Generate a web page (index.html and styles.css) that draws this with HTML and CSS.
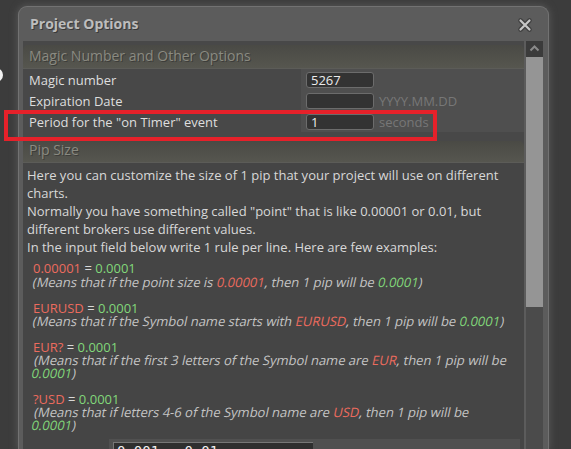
FILE: index.html
```html
<!DOCTYPE html>
<html lang="en">
<head>
  <meta charset="UTF-8" />
  <title>Project Options</title>
  <link rel="stylesheet" href="styles.css">
</head>
<body>
  <div class="dot"></div>
  <div class="window">
    <div class="titlebar">
      <span class="title">Project Options</span>
      <svg class="close" width="16" height="16" viewBox="0 0 16 16">
        <path d="M3.5 3.5 L12.5 12.5 M12.5 3.5 L3.5 12.5" stroke="#404040" stroke-width="4.6" stroke-linecap="round"/>
        <path d="M3.5 3.5 L12.5 12.5 M12.5 3.5 L3.5 12.5" stroke="#c6c6c6" stroke-width="2.2" stroke-linecap="round"/>
      </svg>
    </div>
    <div class="main">
      <div class="content">
        <section class="group">
          <div class="group-head">Magic Number and Other Options</div>
          <div class="row">
            <div class="label">Magic number</div>
            <div class="value"><span class="field">5267</span></div>
          </div>
          <div class="row">
            <div class="label">Expiration Date</div>
            <div class="value"><span class="field"></span><span class="hint">YYYY.MM.DD</span></div>
          </div>
          <div class="row">
            <div class="label">Period for the "on Timer" event</div>
            <div class="value"><span class="field">1</span><span class="hint">seconds</span></div>
          </div>
        </section>

        <section class="group pip">
          <div class="group-head">Pip Size</div>
          <div class="group-body">
            <p class="intro">
              Here you can customize the size of 1 pip that your project will use on different charts.<br>
              Normally you have something called "point" that is like 0.00001 or 0.01, but different brokers use different values.<br>
              In the input field below write 1 rule per line. Here are few examples:
            </p>
            <div class="examples">
              <div class="ex">
                <div><span class="r">0.00001</span> = <span class="g">0.0001</span></div>
                <i>(Means that if the point size is <span class="r">0.00001</span>, then 1 pip will be <span class="g">0.0001</span>)</i>
              </div>
              <div class="ex">
                <div><span class="r">EURUSD</span> = <span class="g">0.0001</span></div>
                <i>(Means that if the Symbol name starts with <span class="r">EURUSD</span>, then 1 pip will be <span class="g">0.0001</span>)</i>
              </div>
              <div class="ex">
                <div><span class="r">EUR?</span> = <span class="g">0.0001</span></div>
                <i>(Means that if the first 3 letters of the Symbol name are <span class="r">EUR</span>, then 1 pip will be <span class="g">0.0001</span>)</i>
              </div>
              <div class="ex">
                <div><span class="r">?USD</span> = <span class="g">0.0001</span></div>
                <i>(Means that if letters 4-6 of the Symbol name are <span class="r">USD</span>, then 1 pip will be <span class="g">0.0001</span>)</i>
              </div>
            </div>
            <div class="rules">
              <div class="rules-box">0.001 = 0.01</div>
            </div>
          </div>
        </section>
      </div>
      <div class="scrollbar">
        <div class="sb-up">
          <svg width="17" height="16" viewBox="0 0 17 16">
            <polyline points="4.5,9.5 8.5,5.5 12.5,9.5" fill="none" stroke="#8a8a8a" stroke-width="2"/>
          </svg>
        </div>
        <div class="sb-thumb"></div>
        <div class="sb-track"></div>
      </div>
    </div>
  </div>
  <div class="highlight"></div>
</body>
</html>
```

FILE: styles.css
```css
* {
  margin: 0;
  padding: 0;
  box-sizing: border-box;
}
html, body {
  height: 449px;
  overflow: hidden;
}
body {
  background: #3c3c3c;
  font-family: 'Open Sans', sans-serif;
  padding: 6px 0 0 18px;
  position: relative;
}
.dot {
  position: absolute;
  left: -11px;
  top: 68px;
  width: 14px;
  height: 14px;
  border-radius: 50%;
  background: #f2f2f2;
}
.window {
  width: 531px;
  height: 443px;
  background: #5c5c5c;
  border: 1px solid #727272;
  border-bottom: none;
  border-radius: 9px 9px 0 0;
  box-shadow: 0 0 7px 1px #565656;
  display: flex;
  flex-direction: column;
  overflow: hidden;
}
.titlebar {
  height: 34px;
  flex-shrink: 0;
  display: flex;
  align-items: center;
  justify-content: space-between;
  padding: 0 15px 0 11px;
}
.title {
  color: #bdbdbd;
  font-weight: 700;
  font-size: 14px;
  text-shadow: 1px 1px 0 #3a3a3a;
  margin-top: -1px;
}
.close {
  margin-top: 1px;
}
.main {
  flex: 1;
  min-height: 0;
  display: flex;
  padding: 0 5px 0 4px;
  gap: 2px;
}
.content {
  width: 501px;
  background: #484848;
  overflow: hidden;
  padding-top: 4px;
  display: flex;
  flex-direction: column;
  gap: 9px;
}
.group {
  flex-shrink: 0;
}
.group-head {
  height: 24px;
  line-height: 22px;
  padding-left: 6px;
  font-size: 14px;
  color: #8a8a81;
  text-shadow: 1px 1px 0 #3d3d3a;
  background: linear-gradient(#4a4a45, #56564f);
  border-radius: 5px 5px 0 0;
  border-bottom: 1px solid #5c5c58;
}
.row {
  display: flex;
  height: 21px;
  font-size: 13px;
  color: #dedede;
}
.label {
  width: 278px;
  background: #484848;
  padding: 2px 0 0 6px;
  line-height: 19px;
}
.value {
  flex: 1;
  background: #4f4f4f;
  display: flex;
  align-items: center;
  padding: 1px 0 0 5px;
}
.field {
  width: 68px;
  height: 16px;
  background: #333;
  border: 1px solid #6c6c6c;
  border-radius: 3px;
  padding-left: 4px;
  font-size: 13px;
  line-height: 14px;
  color: #ececec;
}
.hint {
  margin-left: 5px;
  color: #777;
  font-size: 13px;
}
.pip .group-head {
  height: 22px;
  line-height: 18px;
}
.group-body {
  background: #454545;
  padding: 3px 4px 0 4px;
  color: #d8d8d8;
  font-size: 13px;
}
.intro {
  line-height: 18px;
}
.examples {
  padding: 0 6px 0 6px;
  margin-top: 6px;
  line-height: 13px;
}
.ex + .ex {
  margin-top: 13px;
}
/* the app draws a slanted regular face, not the real italic */
.ex i {
  display: block;
  font-style: normal;
  color: #c4c4c4;
  transform: skewX(-12deg);
  transform-origin: 0 50%;
}
.ex:first-child i {
  margin-top: 1px;
}
.r {
  color: #ec6b5e;
}
.g {
  color: #82d87a;
}
.rules {
  margin: 7px 0 0 82px;
  height: 30px;
  background: #505050;
  padding: 3px 0 0 4px;
}
.rules-box {
  width: 200px;
  height: 30px;
  background: #2f2f2f;
  border-top: 1px solid #777;
  border-left: 1px solid #777;
  padding: 1px 0 0 3px;
  font-family: 'DejaVu Sans Mono', monospace;
  font-size: 14px;
  line-height: 14px;
  color: #f0f0f0;
}
.scrollbar {
  width: 17px;
  display: flex;
  flex-direction: column;
}
.sb-up {
  height: 16px;
  background: #3b3b3b;
}
.sb-up svg {
  display: block;
}
.sb-thumb {
  height: 250px;
  background: #959595;
}
.sb-track {
  flex: 1;
  background: #4b4b4b;
}
.highlight {
  position: absolute;
  left: 4px;
  top: 110px;
  width: 433px;
  height: 31px;
  border: 4px solid #e6212a;
}
```
